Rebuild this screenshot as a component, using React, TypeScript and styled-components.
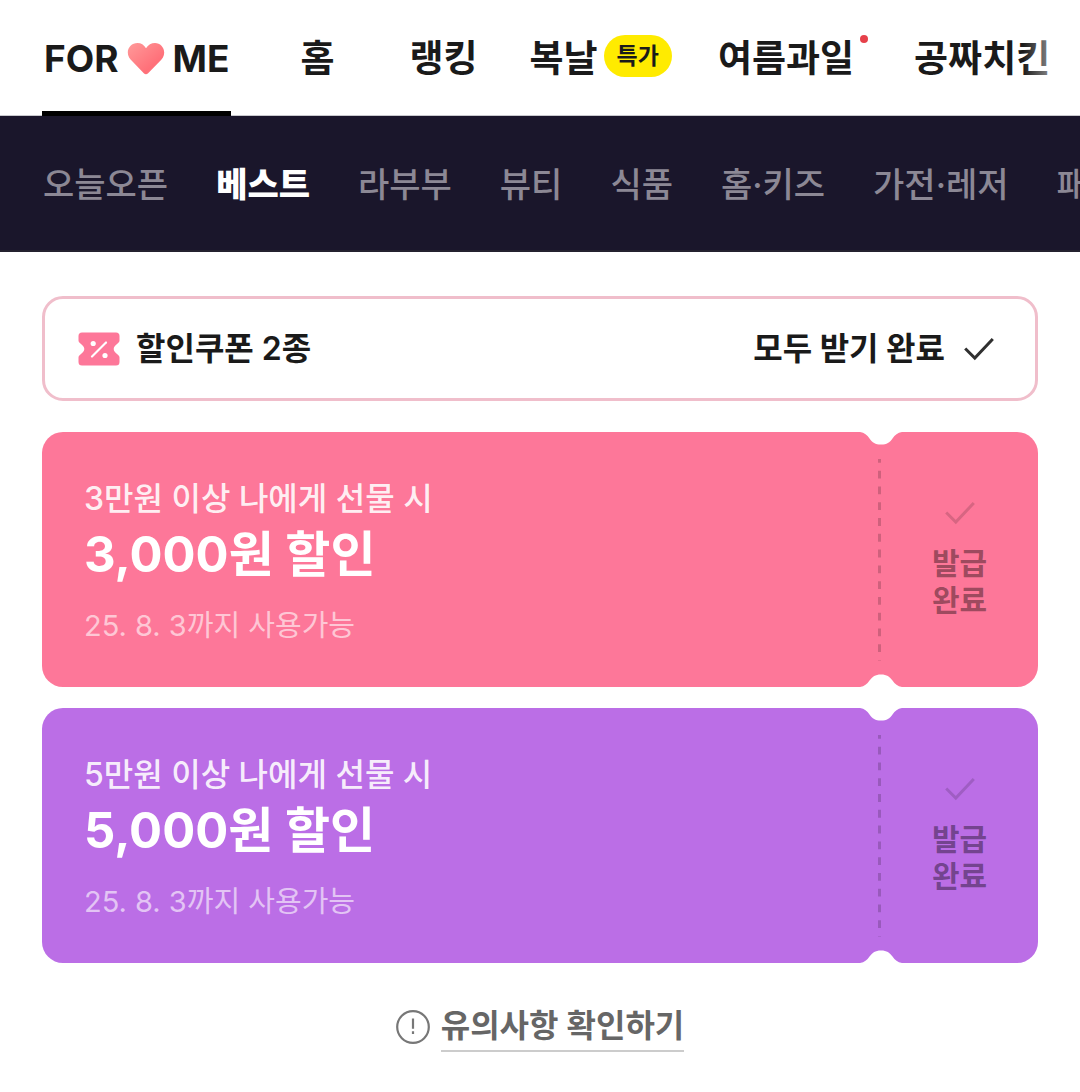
import React from "react";
import styled, { createGlobalStyle } from "styled-components";

const GlobalStyle = createGlobalStyle`
  * { box-sizing: border-box; }
  body {
    margin: 0;
    background: #fff;
    color: #1a1a1a;
    font-family: Inter, "Noto Sans CJK KR", sans-serif;
    overflow-x: hidden;
  }
  a { color: inherit; text-decoration: none; }
  button { font: inherit; color: inherit; border: 0; padding: 0; background: none; }
  h2, p { margin: 0; }
  svg { display: block; flex: none; }
`;

const TopNav = styled.nav`
  position: relative;
  height: 116px;
  padding-left: 42px;
  display: flex;
  gap: 46px;
  overflow: hidden;
  box-shadow: inset 0 -1px #c9c9ce;
`;

const TopFade = styled.span`
  position: absolute;
  top: 0;
  right: 0;
  width: 57px;
  height: 110px;
  background: linear-gradient(to right, rgba(255, 255, 255, 0), #fff);
`;

const TopTab = styled.a<{ $active?: boolean }>`
  position: relative;
  flex: none;
  min-width: 80px;
  height: 116px;
  padding-top: 7px;
  display: flex;
  justify-content: center;
  align-items: center;
  gap: 6px;
  font-size: 37px;
  font-weight: 700;
  line-height: 48px;
  white-space: nowrap;
  border-bottom: 5px solid ${(p) => (p.$active ? "#000" : "transparent")};
`;

const Brand = styled.span`
  padding: 0 2px;
  display: flex;
  align-items: center;
  gap: 8px;
`;

const Pill = styled.span`
  height: 42px;
  margin-bottom: 7px;
  padding: 0 13px;
  border-radius: 21px;
  background: #ffeb00;
  font-size: 23px;
  line-height: 42px;
`;

const NewDot = styled.span`
  align-self: flex-start;
  margin-top: 28px;
  width: 8px;
  height: 8px;
  border-radius: 50%;
  background: #e6404a;
`;

const SubNav = styled.nav`
  height: 136px;
  padding: 4px 0 0 43px;
  display: flex;
  align-items: center;
  gap: 48px;
  overflow: hidden;
  background: #1a162b;
  border-bottom: 2px solid #24212f;
`;

const SubTab = styled.a<{ $active?: boolean }>`
  flex: none;
  font-size: 34px;
  line-height: 48px;
  white-space: nowrap;
  color: ${(p) => (p.$active ? "#fff" : "#8c8895")};
  font-weight: ${(p) => (p.$active ? 800 : 500)};
`;

const Content = styled.main`
  padding: 44px 42px 32px;
  display: flex;
  flex-direction: column;
`;

const Summary = styled.section`
  height: 105px;
  padding: 0 41px 0 33px;
  display: flex;
  align-items: center;
  justify-content: space-between;
  border: 3px solid #f0becb;
  border-radius: 21px;
  font-size: 32px;
  line-height: 48px;
`;

const SummaryTitle = styled.h2`
  display: flex;
  align-items: center;
  gap: 16px;
  font-size: 32px;
  font-weight: 600;
`;

const ClaimAll = styled.button`
  display: flex;
  align-items: center;
  gap: 19px;
  font-weight: 700;
`;

const Tickets = styled.ul`
  list-style: none;
  margin: 31px 0 0;
  padding: 0;
  display: flex;
  flex-direction: column;
  gap: 21px;
`;

const Ticket = styled.li<{ $color: string }>`
  position: relative;
  height: 255px;
  display: flex;
  border-radius: 21px;
  background: ${(p) => p.$color};
  color: #fff;
`;

const TicketBody = styled.div`
  flex: 1;
  padding: 44px 42px 0;
`;

const Condition = styled.p`
  font-size: 32px;
  line-height: 46px;
  font-weight: 500;
  color: rgba(255, 255, 255, 0.9);
`;

const Amount = styled.p`
  font-size: 49px;
  line-height: 66px;
  font-weight: 700;
`;

const Expiry = styled.p`
  margin-top: 15px;
  font-size: 29px;
  line-height: 46px;
  color: rgba(255, 255, 255, 0.6);
`;

const Perforation = styled.svg`
  margin-top: 27px;
`;

const Stub = styled.button`
  width: 157px;
  display: flex;
  flex-direction: column;
  align-items: center;
  justify-content: center;
  gap: 20px;
  font-size: 30px;
  line-height: 37px;
  font-weight: 700;
  color: rgba(0, 0, 0, 0.4);
`;

const StubText = styled.span`
  width: 2em;
  word-break: break-all;
`;

const Notch = styled.svg<{ $bottom?: boolean }>`
  position: absolute;
  right: 136px;
  ${(p) => (p.$bottom ? "bottom: 0; transform: scaleY(-1);" : "top: 0;")}
`;

const Footer = styled.footer`
  margin-top: 39px;
  display: flex;
  justify-content: center;
`;

const NoticeLink = styled.a`
  display: flex;
  align-items: center;
  gap: 11px;
  color: #666;
  font-size: 32px;
  font-weight: 600;
  line-height: 48px;
`;

const NoticeText = styled.span`
  border-bottom: 2px solid #ccc;
`;

function Heart() {
  return (
    <svg width="38" height="33" viewBox="0 0 38 33" aria-hidden="true">
      <defs>
        <linearGradient id="heart" x1="0" y1="0" x2="1" y2="1">
          <stop offset="0" stopColor="#ff9a9a" />
          <stop offset="0.7" stopColor="#ff7079" />
          <stop offset="1" stopColor="#ff7b80" />
        </linearGradient>
      </defs>
      <path
        fill="url(#heart)"
        d="M10.500 0C5 0 .8 4.200.8 9.400c0 3.700 1.900 6.300 4.700 9.200l11.300 11.700c1.300 1.200 3 1.200 4.300 0l11.500-11.700c2.800-2.900 4.600-5.500 4.600-9.200C37.200 4.200 33 0 28 0c-3.700 0-6.800 1.900-9 5.300C16.900 1.900 14.100 0 10.500 0z"
      />
    </svg>
  );
}

function CouponIcon() {
  return (
    <svg width="42" height="34" viewBox="0 0 42 34" aria-hidden="true">
      <path
        fill="#fd7799"
        d="M4 .5h34a3.500 3.500 0 0 1 3.500 3.500v4.500c0 1.500-1 2.200-2.200 3.200-2 1.700-3.600 3.300-3.600 5.300s1.600 3.600 3.600 5.300c1.200 1 2.200 1.700 2.200 3.200V30a3.500 3.500 0 0 1-3.500 3.500H4A3.500 3.500 0 0 1 .5 30v-4.500c0-1.500 1-2.200 2.200-3.200 2-1.700 3.600-3.300 3.600-5.300s-1.600-3.600-3.600-5.300C1.500 10.700.5 10 .5 8.500V4A3.500 3.500 0 0 1 4 .5z"
      />
      <path d="M14 24.500L28 10.500" stroke="#fff" strokeWidth="2.200" strokeLinecap="round" />
      <circle cx="15.200" cy="11.500" r="2.600" fill="#fff" />
      <circle cx="27" cy="23.500" r="2.600" fill="#fff" />
    </svg>
  );
}

function Check({ color }: { color: string }) {
  return (
    <svg width="30" height="24" viewBox="0 0 30 24" fill="none" aria-hidden="true">
      <path d="M1.200 11.500L10.800 21L28.800 2" stroke={color} strokeWidth="3" />
    </svg>
  );
}

function NotchShape({ bottom }: { bottom?: boolean }) {
  return (
    <Notch $bottom={bottom} width="42" height="13" viewBox="0 0 42 13" aria-hidden="true">
      <path
        fill="#fff"
        d="M0 0C4.500.6 7 3 9.500 6.500C12.500 10.500 15 12.600 21 12.600S29.500 10.500 32.500 6.500C35 3 37.500.6 42 0z"
      />
    </Notch>
  );
}

const subTabs = ["오늘오픈", "베스트", "라부부", "뷰티", "식품", "홈·키즈", "가전·레저", "패션"];

const coupons = [
  { color: "#fd7799", condition: "3만원 이상 나에게 선물 시", amount: "3,000원 할인", expiry: "25. 8. 3까지 사용가능" },
  { color: "#bb6ee6", condition: "5만원 이상 나에게 선물 시", amount: "5,000원 할인", expiry: "25. 8. 3까지 사용가능" },
];

export default function App() {
  return (
    <>
      <GlobalStyle />
      <TopNav>
        <TopTab href="#forme" $active>
          <Brand>
            <span>FOR</span>
            <Heart />
            <span>ME</span>
          </Brand>
        </TopTab>
        <TopTab href="#home">홈</TopTab>
        <TopTab href="#ranking">랭킹</TopTab>
        <TopTab href="#boknal">
          복날<Pill>특가</Pill>
        </TopTab>
        <TopTab href="#fruit">
          여름과일
          <NewDot />
        </TopTab>
        <TopTab href="#chicken">공짜치킨</TopTab>
        <TopFade />
      </TopNav>
      <SubNav>
        {subTabs.map((label) => (
          <SubTab key={label} href={`#${label}`} $active={label === "베스트"}>
            {label}
          </SubTab>
        ))}
      </SubNav>
      <Content>
        <Summary>
          <SummaryTitle>
            <CouponIcon />
            할인쿠폰 2종
          </SummaryTitle>
          <ClaimAll type="button">
            모두 받기 완료
            <Check color="#303030" />
          </ClaimAll>
        </Summary>
        <Tickets>
          {coupons.map((c) => (
            <Ticket key={c.amount} $color={c.color}>
              <TicketBody>
                <Condition>{c.condition}</Condition>
                <Amount>{c.amount}</Amount>
                <Expiry>{c.expiry}</Expiry>
              </TicketBody>
              <Perforation width="3" height="202" aria-hidden="true">
                <path d="M1.500 0V201.500" stroke="#000" strokeOpacity="0.18" strokeWidth="3" strokeDasharray="7.800 7.970" strokeDashoffset="4" />
              </Perforation>
              <Stub type="button" disabled>
                <Check color="rgba(0, 0, 0, 0.15)" />
                <StubText>발급완료</StubText>
              </Stub>
              <NotchShape />
              <NotchShape bottom />
            </Ticket>
          ))}
        </Tickets>
        <Footer>
          <NoticeLink href="#notice">
            <svg width="34" height="34" viewBox="0 0 34 34" fill="none" aria-hidden="true">
              <circle cx="17" cy="17" r="15.800" stroke="#777" strokeWidth="2.200" />
              <path d="M17 8.500V18.800M17 21.300V24" stroke="#777" strokeWidth="2.200" />
            </svg>
            <NoticeText>유의사항 확인하기</NoticeText>
          </NoticeLink>
        </Footer>
      </Content>
    </>
  );
}
